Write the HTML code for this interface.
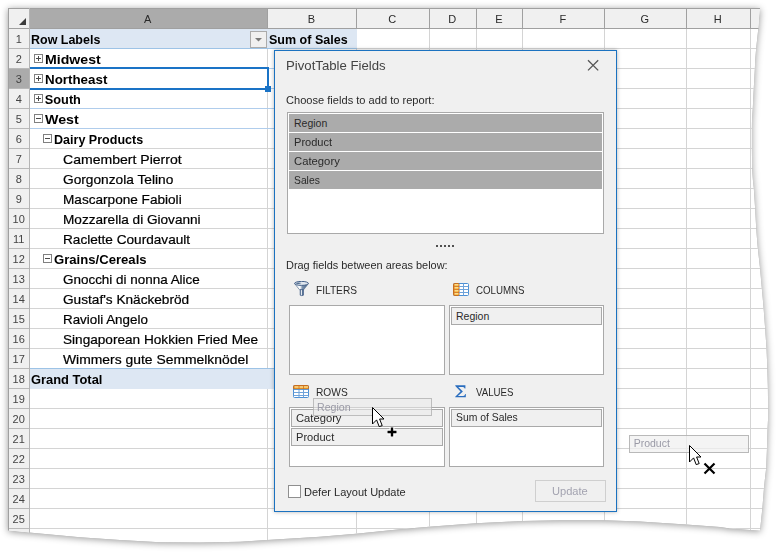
<!DOCTYPE html><html><head><meta charset="utf-8"><style>
html,body{margin:0;padding:0;width:780px;height:555px;overflow:hidden;background:#fff;}
body{font-family:"Liberation Sans",sans-serif;position:relative;}
.a{position:absolute;}
#wrap{position:absolute;left:0;top:0;width:780px;height:555px;filter:drop-shadow(0 0 0.6px rgba(0,0,0,0.35)) drop-shadow(0.5px 1px 3.5px rgba(0,0,0,0.4));}
#sheet{position:absolute;left:0;top:0;width:780px;height:555px;background:#fff;overflow:hidden;
clip-path:polygon(8px 8px,760px 8px,758.4px 28px,756.2px 48px,755.2px 60px,754.9px 68px,753.8px 88px,752.8px 108px,752px 120px,751.9px 128px,751.9px 148px,752.1px 168px,752.9px 180px,753.8px 188px,755.1px 208px,756.2px 228px,757.1px 240px,757.8px 248px,760px 268px,761.8px 288px,762.9px 300px,763.6px 308px,765.1px 328px,766.5px 348px,767px 360px,767.3px 368px,767.9px 388px,768.1px 408px,768px 420px,767.6px 428px,767px 448px,766.2px 468px,764.8px 480px,764px 488px,762.4px 508px,760.3px 528px,760px 530.8px,750px 530px,730px 528.6px,720px 527px,686px 524.5px,640px 521.6px,604px 520.2px,560px 520.3px,522px 520.9px,476px 523.3px,429px 526.7px,400px 529.2px,356px 533.8px,320px 536.8px,267px 540.1px,240px 541.7px,200px 542.5px,160px 542.3px,120px 540.1px,80px 537.2px,29px 532.6px,8px 530.4px);}
.hl{position:absolute;height:1px;background:#d4d4d4;}
.vl{position:absolute;width:1px;background:#d4d4d4;}
.box{position:absolute;width:7px;height:7px;border:1px solid #808080;background:#fff;}
.box:before{content:"";position:absolute;left:1px;top:3px;width:5px;height:1px;background:#4a4a4a;}
.box.p:after{content:"";position:absolute;left:3px;top:1px;width:1px;height:5px;background:#4a4a4a;}
#dlg{position:absolute;left:274px;top:50px;width:341px;height:460px;border:1px solid #1b72c0;background:#f0f0f0;box-shadow:0 0 4px rgba(0,0,0,0.3);}
.lb{position:absolute;border:1px solid #a9a9a9;background:#fff;}
.fi{position:absolute;height:18px;background:#ababab;}
.it{position:absolute;height:16px;border:1px solid #a9a9a9;background:#f0f0f0;}
</style></head><body>
<div id="wrap"><div id="sheet">
<div class="a" style="left:8px;top:8px;width:770px;height:20px;background:#f0f0f0"></div>
<div class="a" style="left:8px;top:8px;width:21px;height:540px;background:#f0f0f0"></div>
<div class="a" style="left:30px;top:9px;width:237px;height:19px;background:#ababab"></div>
<div class="a" style="left:9px;top:69px;width:20px;height:19px;background:#ababab"></div>
<div class="hl" style="left:30px;top:48px;width:750px"></div>
<div class="hl" style="left:30px;top:68px;width:750px"></div>
<div class="hl" style="left:30px;top:88px;width:750px"></div>
<div class="hl" style="left:30px;top:108px;width:750px"></div>
<div class="hl" style="left:30px;top:128px;width:750px"></div>
<div class="hl" style="left:30px;top:148px;width:750px"></div>
<div class="hl" style="left:30px;top:168px;width:750px"></div>
<div class="hl" style="left:30px;top:188px;width:750px"></div>
<div class="hl" style="left:30px;top:208px;width:750px"></div>
<div class="hl" style="left:30px;top:228px;width:750px"></div>
<div class="hl" style="left:30px;top:248px;width:750px"></div>
<div class="hl" style="left:30px;top:268px;width:750px"></div>
<div class="hl" style="left:30px;top:288px;width:750px"></div>
<div class="hl" style="left:30px;top:308px;width:750px"></div>
<div class="hl" style="left:30px;top:328px;width:750px"></div>
<div class="hl" style="left:30px;top:348px;width:750px"></div>
<div class="hl" style="left:30px;top:368px;width:750px"></div>
<div class="hl" style="left:30px;top:388px;width:750px"></div>
<div class="hl" style="left:30px;top:408px;width:750px"></div>
<div class="hl" style="left:30px;top:428px;width:750px"></div>
<div class="hl" style="left:30px;top:448px;width:750px"></div>
<div class="hl" style="left:30px;top:468px;width:750px"></div>
<div class="hl" style="left:30px;top:488px;width:750px"></div>
<div class="hl" style="left:30px;top:508px;width:750px"></div>
<div class="hl" style="left:30px;top:528px;width:750px"></div>
<div class="hl" style="left:30px;top:548px;width:750px"></div>
<div class="hl" style="left:8px;top:48px;width:21px;background:#b9b9b9"></div>
<div class="hl" style="left:8px;top:68px;width:21px;background:#b9b9b9"></div>
<div class="hl" style="left:8px;top:88px;width:21px;background:#b9b9b9"></div>
<div class="hl" style="left:8px;top:108px;width:21px;background:#b9b9b9"></div>
<div class="hl" style="left:8px;top:128px;width:21px;background:#b9b9b9"></div>
<div class="hl" style="left:8px;top:148px;width:21px;background:#b9b9b9"></div>
<div class="hl" style="left:8px;top:168px;width:21px;background:#b9b9b9"></div>
<div class="hl" style="left:8px;top:188px;width:21px;background:#b9b9b9"></div>
<div class="hl" style="left:8px;top:208px;width:21px;background:#b9b9b9"></div>
<div class="hl" style="left:8px;top:228px;width:21px;background:#b9b9b9"></div>
<div class="hl" style="left:8px;top:248px;width:21px;background:#b9b9b9"></div>
<div class="hl" style="left:8px;top:268px;width:21px;background:#b9b9b9"></div>
<div class="hl" style="left:8px;top:288px;width:21px;background:#b9b9b9"></div>
<div class="hl" style="left:8px;top:308px;width:21px;background:#b9b9b9"></div>
<div class="hl" style="left:8px;top:328px;width:21px;background:#b9b9b9"></div>
<div class="hl" style="left:8px;top:348px;width:21px;background:#b9b9b9"></div>
<div class="hl" style="left:8px;top:368px;width:21px;background:#b9b9b9"></div>
<div class="hl" style="left:8px;top:388px;width:21px;background:#b9b9b9"></div>
<div class="hl" style="left:8px;top:408px;width:21px;background:#b9b9b9"></div>
<div class="hl" style="left:8px;top:428px;width:21px;background:#b9b9b9"></div>
<div class="hl" style="left:8px;top:448px;width:21px;background:#b9b9b9"></div>
<div class="hl" style="left:8px;top:468px;width:21px;background:#b9b9b9"></div>
<div class="hl" style="left:8px;top:488px;width:21px;background:#b9b9b9"></div>
<div class="hl" style="left:8px;top:508px;width:21px;background:#b9b9b9"></div>
<div class="hl" style="left:8px;top:528px;width:21px;background:#b9b9b9"></div>
<div class="hl" style="left:8px;top:548px;width:21px;background:#b9b9b9"></div>
<div class="vl" style="left:267px;top:28px;height:520px"></div>
<div class="vl" style="left:356px;top:28px;height:520px"></div>
<div class="vl" style="left:429px;top:28px;height:520px"></div>
<div class="vl" style="left:476px;top:28px;height:520px"></div>
<div class="vl" style="left:522px;top:28px;height:520px"></div>
<div class="vl" style="left:604px;top:28px;height:520px"></div>
<div class="vl" style="left:686px;top:28px;height:520px"></div>
<div class="vl" style="left:750px;top:28px;height:520px"></div>
<div class="a" style="left:30px;top:29px;width:327px;height:19px;background:#dde7f3"></div>
<div class="a" style="left:30px;top:48px;width:327px;height:1px;background:#9dc3e6"></div>
<div class="a" style="left:30px;top:68px;width:326px;height:1px;background:#b0cdec"></div>
<div class="a" style="left:30px;top:88px;width:326px;height:1px;background:#b0cdec"></div>
<div class="a" style="left:30px;top:108px;width:326px;height:1px;background:#b0cdec"></div>
<div class="a" style="left:30px;top:128px;width:326px;height:1px;background:#b0cdec"></div>
<div class="a" style="left:30px;top:369px;width:250px;height:20px;background:#dde7f3"></div>
<div class="a" style="left:30px;top:368px;width:250px;height:1px;background:#9dc3e6"></div>
<div class="a" style="left:8px;top:8px;width:770px;height:1px;background:#a0a0a0"></div>
<div class="a" style="left:8px;top:8px;width:1px;height:540px;background:#a0a0a0"></div>
<div class="a" style="left:8px;top:28px;width:770px;height:1px;background:#a0a0a0"></div>
<div class="a" style="left:29px;top:8px;width:1px;height:540px;background:#b4b4b4"></div>
<div class="a" style="left:267px;top:8px;width:1px;height:20px;background:#a0a0a0"></div>
<div class="a" style="left:356px;top:8px;width:1px;height:20px;background:#a0a0a0"></div>
<div class="a" style="left:429px;top:8px;width:1px;height:20px;background:#a0a0a0"></div>
<div class="a" style="left:476px;top:8px;width:1px;height:20px;background:#a0a0a0"></div>
<div class="a" style="left:522px;top:8px;width:1px;height:20px;background:#a0a0a0"></div>
<div class="a" style="left:604px;top:8px;width:1px;height:20px;background:#a0a0a0"></div>
<div class="a" style="left:686px;top:8px;width:1px;height:20px;background:#a0a0a0"></div>
<div class="a" style="left:750px;top:8px;width:1px;height:20px;background:#a0a0a0"></div>
<div style="position:absolute;left:144.12px;top:12.99px;font-size:11px;line-height:13.20px;white-space:nowrap;color:#2a2a2a;">A</div>
<div style="position:absolute;left:307.64px;top:12.99px;font-size:11px;line-height:13.20px;white-space:nowrap;color:#2a2a2a;">B</div>
<div style="position:absolute;left:388.34px;top:12.99px;font-size:11px;line-height:13.20px;white-space:nowrap;color:#2a2a2a;">C</div>
<div style="position:absolute;left:448.34px;top:12.99px;font-size:11px;line-height:13.20px;white-space:nowrap;color:#2a2a2a;">D</div>
<div style="position:absolute;left:495.14px;top:12.99px;font-size:11px;line-height:13.20px;white-space:nowrap;color:#2a2a2a;">E</div>
<div style="position:absolute;left:559.44px;top:12.99px;font-size:11px;line-height:13.20px;white-space:nowrap;color:#2a2a2a;">F</div>
<div style="position:absolute;left:640.51px;top:12.99px;font-size:11px;line-height:13.20px;white-space:nowrap;color:#2a2a2a;">G</div>
<div style="position:absolute;left:713.84px;top:12.99px;font-size:11px;line-height:13.20px;white-space:nowrap;color:#2a2a2a;">H</div>
<div style="position:absolute;left:15.65px;top:32.59px;font-size:11px;line-height:13.20px;white-space:nowrap;color:#444;">1</div>
<div style="position:absolute;left:15.65px;top:52.59px;font-size:11px;line-height:13.20px;white-space:nowrap;color:#444;">2</div>
<div style="position:absolute;left:15.65px;top:72.59px;font-size:11px;line-height:13.20px;white-space:nowrap;color:#444;">3</div>
<div style="position:absolute;left:15.65px;top:92.59px;font-size:11px;line-height:13.20px;white-space:nowrap;color:#444;">4</div>
<div style="position:absolute;left:15.65px;top:112.59px;font-size:11px;line-height:13.20px;white-space:nowrap;color:#444;">5</div>
<div style="position:absolute;left:15.65px;top:132.59px;font-size:11px;line-height:13.20px;white-space:nowrap;color:#444;">6</div>
<div style="position:absolute;left:15.65px;top:152.59px;font-size:11px;line-height:13.20px;white-space:nowrap;color:#444;">7</div>
<div style="position:absolute;left:15.65px;top:172.59px;font-size:11px;line-height:13.20px;white-space:nowrap;color:#444;">8</div>
<div style="position:absolute;left:15.65px;top:192.59px;font-size:11px;line-height:13.20px;white-space:nowrap;color:#444;">9</div>
<div style="position:absolute;left:12.59px;top:212.59px;font-size:11px;line-height:13.20px;white-space:nowrap;color:#444;">10</div>
<div style="position:absolute;left:12.98px;top:232.59px;font-size:11px;line-height:13.20px;white-space:nowrap;color:#444;">11</div>
<div style="position:absolute;left:12.59px;top:252.59px;font-size:11px;line-height:13.20px;white-space:nowrap;color:#444;">12</div>
<div style="position:absolute;left:12.59px;top:272.59px;font-size:11px;line-height:13.20px;white-space:nowrap;color:#444;">13</div>
<div style="position:absolute;left:12.59px;top:292.59px;font-size:11px;line-height:13.20px;white-space:nowrap;color:#444;">14</div>
<div style="position:absolute;left:12.59px;top:312.59px;font-size:11px;line-height:13.20px;white-space:nowrap;color:#444;">15</div>
<div style="position:absolute;left:12.59px;top:332.59px;font-size:11px;line-height:13.20px;white-space:nowrap;color:#444;">16</div>
<div style="position:absolute;left:12.59px;top:352.59px;font-size:11px;line-height:13.20px;white-space:nowrap;color:#444;">17</div>
<div style="position:absolute;left:12.59px;top:372.59px;font-size:11px;line-height:13.20px;white-space:nowrap;color:#444;">18</div>
<div style="position:absolute;left:12.59px;top:392.59px;font-size:11px;line-height:13.20px;white-space:nowrap;color:#444;">19</div>
<div style="position:absolute;left:12.59px;top:412.59px;font-size:11px;line-height:13.20px;white-space:nowrap;color:#444;">20</div>
<div style="position:absolute;left:12.59px;top:432.59px;font-size:11px;line-height:13.20px;white-space:nowrap;color:#444;">21</div>
<div style="position:absolute;left:12.59px;top:452.59px;font-size:11px;line-height:13.20px;white-space:nowrap;color:#444;">22</div>
<div style="position:absolute;left:12.59px;top:472.59px;font-size:11px;line-height:13.20px;white-space:nowrap;color:#444;">23</div>
<div style="position:absolute;left:12.59px;top:492.59px;font-size:11px;line-height:13.20px;white-space:nowrap;color:#444;">24</div>
<div style="position:absolute;left:12.59px;top:512.59px;font-size:11px;line-height:13.20px;white-space:nowrap;color:#444;">25</div>
<svg class="a" style="left:19px;top:18px" width="7" height="7"><path d="M7 0 L7 7 L0 7 Z" fill="#3c3c3c"/></svg>
<div style="position:absolute;left:30.80px;top:31.93px;font-size:12.75px;line-height:15.30px;white-space:nowrap;color:#000;font-weight:bold;transform:scaleX(0.9785);transform-origin:0 0;">Row Labels</div>
<div style="position:absolute;left:268.50px;top:31.93px;font-size:12.75px;line-height:15.30px;white-space:nowrap;color:#000;font-weight:bold;transform:scaleX(0.9816);transform-origin:0 0;">Sum of Sales</div>
<div class="a" style="left:250px;top:31px;width:15px;height:15px;border:1px solid #ababab;background:#f0f0f0"></div>
<svg class="a" style="left:255px;top:38px" width="8" height="4"><path d="M0 0 L7 0 L3.5 3.5 Z" fill="#7a7a7a"/></svg>
<div class="box p" style="left:34px;top:54px"></div>
<div style="position:absolute;left:44.80px;top:51.93px;font-size:12.75px;line-height:15.30px;white-space:nowrap;color:#000;font-weight:bold;transform:scaleX(1.1074);transform-origin:0 0;">Midwest</div>
<div class="box p" style="left:34px;top:74px"></div>
<div style="position:absolute;left:44.80px;top:71.93px;font-size:12.75px;line-height:15.30px;white-space:nowrap;color:#000;font-weight:bold;transform:scaleX(1.0480);transform-origin:0 0;">Northeast</div>
<div class="box p" style="left:34px;top:94px"></div>
<div style="position:absolute;left:44.80px;top:91.93px;font-size:12.75px;line-height:15.30px;white-space:nowrap;color:#000;font-weight:bold;">South</div>
<div class="box" style="left:34px;top:114px"></div>
<div style="position:absolute;left:44.80px;top:111.93px;font-size:12.75px;line-height:15.30px;white-space:nowrap;color:#000;font-weight:bold;transform:scaleX(1.1152);transform-origin:0 0;">West</div>
<div class="box" style="left:43px;top:134px"></div>
<div style="position:absolute;left:53.90px;top:131.93px;font-size:12.75px;line-height:15.30px;white-space:nowrap;color:#000;font-weight:bold;transform:scaleX(0.9833);transform-origin:0 0;">Dairy Products</div>
<div style="position:absolute;left:62.80px;top:152.55px;font-size:12.1px;line-height:14.52px;white-space:nowrap;color:#000;transform:scaleX(1.1616);transform-origin:0 0;-webkit-text-stroke:0.2px #000;">Camembert Pierrot</div>
<div style="position:absolute;left:62.80px;top:172.55px;font-size:12.1px;line-height:14.52px;white-space:nowrap;color:#000;transform:scaleX(1.1341);transform-origin:0 0;-webkit-text-stroke:0.2px #000;">Gorgonzola Telino</div>
<div style="position:absolute;left:62.80px;top:192.55px;font-size:12.1px;line-height:14.52px;white-space:nowrap;color:#000;transform:scaleX(1.1243);transform-origin:0 0;-webkit-text-stroke:0.2px #000;">Mascarpone Fabioli</div>
<div style="position:absolute;left:62.80px;top:212.55px;font-size:12.1px;line-height:14.52px;white-space:nowrap;color:#000;transform:scaleX(1.1251);transform-origin:0 0;-webkit-text-stroke:0.2px #000;">Mozzarella di Giovanni</div>
<div style="position:absolute;left:62.80px;top:232.55px;font-size:12.1px;line-height:14.52px;white-space:nowrap;color:#000;transform:scaleX(1.1255);transform-origin:0 0;-webkit-text-stroke:0.2px #000;">Raclette Courdavault</div>
<div class="box" style="left:43px;top:254px"></div>
<div style="position:absolute;left:53.90px;top:251.93px;font-size:12.75px;line-height:15.30px;white-space:nowrap;color:#000;font-weight:bold;transform:scaleX(1.0287);transform-origin:0 0;">Grains/Cereals</div>
<div style="position:absolute;left:62.80px;top:272.55px;font-size:12.1px;line-height:14.52px;white-space:nowrap;color:#000;transform:scaleX(1.1119);transform-origin:0 0;-webkit-text-stroke:0.2px #000;">Gnocchi di nonna Alice</div>
<div style="position:absolute;left:62.80px;top:292.55px;font-size:12.1px;line-height:14.52px;white-space:nowrap;color:#000;transform:scaleX(1.1275);transform-origin:0 0;-webkit-text-stroke:0.2px #000;">Gustaf's Kn&auml;ckebr&ouml;d</div>
<div style="position:absolute;left:62.80px;top:312.55px;font-size:12.1px;line-height:14.52px;white-space:nowrap;color:#000;transform:scaleX(1.1067);transform-origin:0 0;-webkit-text-stroke:0.2px #000;">Ravioli Angelo</div>
<div style="position:absolute;left:62.80px;top:332.55px;font-size:12.1px;line-height:14.52px;white-space:nowrap;color:#000;transform:scaleX(1.1250);transform-origin:0 0;-webkit-text-stroke:0.2px #000;">Singaporean Hokkien Fried Mee</div>
<div style="position:absolute;left:62.80px;top:352.55px;font-size:12.1px;line-height:14.52px;white-space:nowrap;color:#000;transform:scaleX(1.1486);transform-origin:0 0;-webkit-text-stroke:0.2px #000;">Wimmers gute Semmelkn&ouml;del</div>
<div style="position:absolute;left:31.10px;top:371.93px;font-size:12.75px;line-height:15.30px;white-space:nowrap;color:#000;font-weight:bold;transform:scaleX(1.0117);transform-origin:0 0;">Grand Total</div>
<div class="a" style="left:30px;top:67px;width:239px;height:2px;background:#1a73c6"></div>
<div class="a" style="left:30px;top:88px;width:236px;height:2px;background:#1a73c6"></div>
<div class="a" style="left:267px;top:67px;width:2px;height:21px;background:#1a73c6"></div>
<div class="a" style="left:265px;top:86px;width:6px;height:6px;background:#1a73c6;border:0"></div>
<div class="a" style="left:629px;top:435px;width:118px;height:16px;border:1px solid rgba(160,160,160,0.7);background:rgba(240,240,240,0.75)"></div>
<div style="position:absolute;left:633.70px;top:437.46px;font-size:10.5px;line-height:12.60px;white-space:nowrap;color:#9a9aa6;">Product</div>
</div></div>
<div id="dlg">
<div style="position:absolute;left:10.80px;top:7.21px;font-size:13.3px;line-height:15.96px;white-space:nowrap;color:#444;transform:scaleX(0.9916);transform-origin:0 0;">PivotTable Fields</div>
<svg class="a" style="left:312px;top:8px" width="13" height="13"><path d="M1 1.2 L11.2 11.4 M11.2 1.2 L1 11.4" stroke="#555" stroke-width="1.3"/></svg>
<div style="position:absolute;left:10.80px;top:42.56px;font-size:10.5px;line-height:12.60px;white-space:nowrap;color:#2a2a2a;transform:scaleX(1.0558);transform-origin:0 0;">Choose fields to add to report:</div>
<div class="lb" style="left:12px;top:61px;width:315px;height:120px">
</div>
<div class="fi" style="left:14px;top:63px;width:313px"></div>
<div class="fi" style="left:14px;top:82px;width:313px"></div>
<div class="fi" style="left:14px;top:101px;width:313px"></div>
<div class="fi" style="left:14px;top:120px;width:313px"></div>
<div style="position:absolute;left:19.00px;top:66.06px;font-size:10.5px;line-height:12.60px;white-space:nowrap;color:#2a2a2a;">Region</div>
<div style="position:absolute;left:19.00px;top:85.06px;font-size:10.5px;line-height:12.60px;white-space:nowrap;color:#2a2a2a;transform:scaleX(1.0533);transform-origin:0 0;">Product</div>
<div style="position:absolute;left:19.00px;top:104.06px;font-size:10.5px;line-height:12.60px;white-space:nowrap;color:#2a2a2a;transform:scaleX(1.0744);transform-origin:0 0;">Category</div>
<div style="position:absolute;left:19.00px;top:123.06px;font-size:10.5px;line-height:12.60px;white-space:nowrap;color:#2a2a2a;transform:scaleX(0.9829);transform-origin:0 0;">Sales</div>
<div class="a" style="left:161px;top:194px;width:2px;height:2px;background:#505050"></div>
<div class="a" style="left:165px;top:194px;width:2px;height:2px;background:#505050"></div>
<div class="a" style="left:169px;top:194px;width:2px;height:2px;background:#505050"></div>
<div class="a" style="left:173px;top:194px;width:2px;height:2px;background:#505050"></div>
<div class="a" style="left:177px;top:194px;width:2px;height:2px;background:#505050"></div>
<div style="position:absolute;left:10.90px;top:208.06px;font-size:10.5px;line-height:12.60px;white-space:nowrap;color:#2a2a2a;transform:scaleX(1.0410);transform-origin:0 0;">Drag fields between areas below:</div>
<svg class="a" style="left:19px;top:230px" width="16" height="16" viewBox="0 0 16 16"><defs><linearGradient id="fg" x1="0" y1="0" x2="1" y2="0"><stop offset="0" stop-color="#e8edf2"/><stop offset="0.4" stop-color="#ffffff"/><stop offset="0.55" stop-color="#7d93ae"/><stop offset="1" stop-color="#3e5b80"/></linearGradient><linearGradient id="fg2" x1="0" y1="0" x2="1" y2="0"><stop offset="0" stop-color="#4f6a8c"/><stop offset="0.35" stop-color="#ffffff"/><stop offset="0.7" stop-color="#5b7698"/><stop offset="1" stop-color="#3b577c"/></linearGradient></defs><path d="M0.6 2.6 L5.6 8.8 L9.6 8.8 L14.4 2.6 Z" fill="url(#fg)" stroke="#5a7493" stroke-width="0.7"/><path d="M6.2 8.6 L6.2 14.2 Q7.8 15.1 9.4 14.2 L9.4 8.6 Z" fill="url(#fg2)" stroke="#45618a" stroke-width="0.8"/><ellipse cx="7.5" cy="2.4" rx="6.9" ry="2" fill="#dfe6ee" stroke="#45628a" stroke-width="1"/><path d="M1.5 2.3 Q4 0.9 7.5 2 Q4.2 3.6 1.5 2.3Z" fill="#4d6a8e"/></svg>
<svg class="a" style="left:178px;top:232px" width="16" height="13" viewBox="0 0 16 13"><defs><linearGradient id="ogc" x1="0" y1="0" x2="0" y2="1"><stop offset="0" stop-color="#fde9a6"/><stop offset="1" stop-color="#f5b53c"/></linearGradient></defs><rect x="0.5" y="0.5" width="15" height="12" rx="1" fill="#fff" stroke="#4a8fd4" stroke-width="1"/><rect x="0.5" y="0.5" width="5.5" height="12" rx="1" fill="#d9822b" stroke="#c96f1e" stroke-width="1"/><rect x="1.5" y="1" width="4" height="2" fill="url(#ogc)"/><rect x="1.5" y="4" width="4" height="2" fill="url(#ogc)"/><rect x="1.5" y="7" width="4" height="2" fill="url(#ogc)"/><rect x="1.5" y="10" width="4" height="2" fill="url(#ogc)"/><rect x="7" y="1" width="3" height="2" fill="#fff"/><rect x="11" y="1" width="4" height="2" fill="#fff"/><rect x="7" y="4" width="3" height="2" fill="#fff"/><rect x="11" y="4" width="4" height="2" fill="#fff"/><rect x="7" y="7" width="3" height="2" fill="#fff"/><rect x="11" y="7" width="4" height="2" fill="#fff"/><rect x="7" y="10" width="3" height="2" fill="#fff"/><rect x="11" y="10" width="4" height="2" fill="#fff"/><rect x="6" y="3" width="9.5" height="1" fill="#6fa3da"/><rect x="6" y="6" width="9.5" height="1" fill="#6fa3da"/><rect x="6" y="9" width="9.5" height="1" fill="#6fa3da"/><rect x="10" y="0.5" width="1" height="12" fill="#6fa3da"/></svg>
<svg class="a" style="left:18px;top:334px" width="16" height="13" viewBox="0 0 16 13"><defs><linearGradient id="ogr" x1="0" y1="0" x2="0" y2="1"><stop offset="0" stop-color="#fde9a6"/><stop offset="1" stop-color="#f5b53c"/></linearGradient></defs><rect x="0.5" y="0.5" width="15" height="12" rx="1" fill="#fff" stroke="#4a8fd4" stroke-width="1"/><rect x="0.5" y="0.5" width="15" height="3.5" rx="1" fill="#d9822b" stroke="#c96f1e" stroke-width="1"/><rect x="1.5" y="1.3" width="4" height="2" fill="url(#ogr)"/><rect x="6.5" y="1.3" width="3.5" height="2" fill="url(#ogr)"/><rect x="11" y="1.3" width="4" height="2" fill="url(#ogr)"/><rect x="0.5" y="7" width="15" height="1" fill="#6fa3da"/><rect x="0.5" y="10" width="15" height="1" fill="#6fa3da"/><rect x="5.5" y="4" width="1" height="8.5" fill="#6fa3da"/><rect x="10" y="4" width="1" height="8.5" fill="#6fa3da"/><rect x="0" y="4" width="16" height="0.8" fill="#4a8fd4"/></svg>
<svg class="a" style="left:180px;top:334px" width="12" height="13" viewBox="0 0 12 13"><path d="M0.3 0.3 H10.4 V3.4 H9.7 Q9.4 1.9 8 1.9 H3.3 L7.9 6.4 L2.9 11 H8.3 Q9.8 11 10.2 9.1 H10.8 V12.3 H0.2 V11.8 L5.5 6.4 L0.3 0.9 Z" fill="#2a6dbe"/></svg>
<div style="position:absolute;left:40.90px;top:232.96px;font-size:10.5px;line-height:12.60px;white-space:nowrap;color:#2a2a2a;transform:scaleX(0.9665);transform-origin:0 0;">FILTERS</div>
<div style="position:absolute;left:201.10px;top:232.86px;font-size:10.5px;line-height:12.60px;white-space:nowrap;color:#2a2a2a;transform:scaleX(0.9257);transform-origin:0 0;">COLUMNS</div>
<div style="position:absolute;left:41.00px;top:334.86px;font-size:10.5px;line-height:12.60px;white-space:nowrap;color:#2a2a2a;transform:scaleX(0.9708);transform-origin:0 0;">ROWS</div>
<div style="position:absolute;left:201.30px;top:334.86px;font-size:10.5px;line-height:12.60px;white-space:nowrap;color:#2a2a2a;transform:scaleX(0.9204);transform-origin:0 0;">VALUES</div>
<div class="lb" style="left:14px;top:254px;width:154px;height:68px"></div>
<div class="lb" style="left:174px;top:254px;width:153px;height:68px"></div>
<div class="lb" style="left:14px;top:356px;width:154px;height:58px"></div>
<div class="lb" style="left:174px;top:356px;width:153px;height:58px"></div>
<div class="it" style="left:176px;top:256px;width:149px"></div>
<div class="it" style="left:16px;top:358px;width:150px"></div>
<div class="it" style="left:16px;top:377px;width:150px"></div>
<div class="it" style="left:176px;top:358px;width:149px"></div>
<div style="position:absolute;left:181.00px;top:259.06px;font-size:10.5px;line-height:12.60px;white-space:nowrap;color:#2a2a2a;">Region</div>
<div style="position:absolute;left:21.10px;top:361.06px;font-size:10.5px;line-height:12.60px;white-space:nowrap;color:#2a2a2a;transform:scaleX(1.0673);transform-origin:0 0;">Category</div>
<div style="position:absolute;left:21.10px;top:379.76px;font-size:10.5px;line-height:12.60px;white-space:nowrap;color:#2a2a2a;transform:scaleX(1.0561);transform-origin:0 0;">Product</div>
<div style="position:absolute;left:181.00px;top:360.46px;font-size:10.5px;line-height:12.60px;white-space:nowrap;color:#2a2a2a;transform:scaleX(0.9884);transform-origin:0 0;">Sum of Sales</div>
<div class="a" style="left:13px;top:434px;width:11px;height:11px;border:1px solid #8f8f8f;background:#fff"></div>
<div style="position:absolute;left:28.80px;top:434.56px;font-size:10.5px;line-height:12.60px;white-space:nowrap;color:#2a2a2a;transform:scaleX(1.0494);transform-origin:0 0;">Defer Layout Update</div>
<div class="a" style="left:260px;top:429px;width:69px;height:20px;border:1px solid #cfcfcf;background:#f0f0f0"></div>
<div style="position:absolute;left:276.70px;top:433.76px;font-size:10.5px;line-height:12.60px;white-space:nowrap;color:#a3a3b0;transform:scaleX(1.0572);transform-origin:0 0;">Update</div>
</div>
<div class="a" style="left:313px;top:398px;width:117px;height:16px;border:1px solid rgba(150,150,150,0.55);background:rgba(235,235,235,0.6)"></div>
<div style="position:absolute;left:316.80px;top:400.56px;font-size:10.5px;line-height:12.60px;white-space:nowrap;color:#9a9aa6;transform:scaleX(1.0125);transform-origin:0 0;">Region</div>
<svg class="a" style="left:371px;top:406px" width="15" height="23" viewBox="-1 -1 15 23"><path d="M0.5 0.5 L0.5 17 L4.6 12.9 L7.2 19.6 L10.2 18.6 L7.6 12 L12 12 Z" fill="#fff" stroke="#000" stroke-width="1"/></svg>
<svg class="a" style="left:688px;top:444px" width="15" height="23" viewBox="-1 -1 15 23"><path d="M0.5 0.5 L0.5 17 L4.6 12.9 L7.2 19.6 L10.2 18.6 L7.6 12 L12 12 Z" fill="#fff" stroke="#000" stroke-width="1"/></svg>
<svg class="a" style="left:385px;top:425px" width="14" height="14"><path d="M7 2 V12 M2 7 H12" stroke="#fff" stroke-width="5"/><path d="M7 2.5 V11.5 M2.5 7 H11.5" stroke="#000" stroke-width="2.4"/></svg>
<svg class="a" style="left:702px;top:461px" width="15" height="15"><path d="M2.5 2.5 L12.5 12.5 M12.5 2.5 L2.5 12.5" stroke="#000" stroke-width="2.2"/></svg>
</body></html>
